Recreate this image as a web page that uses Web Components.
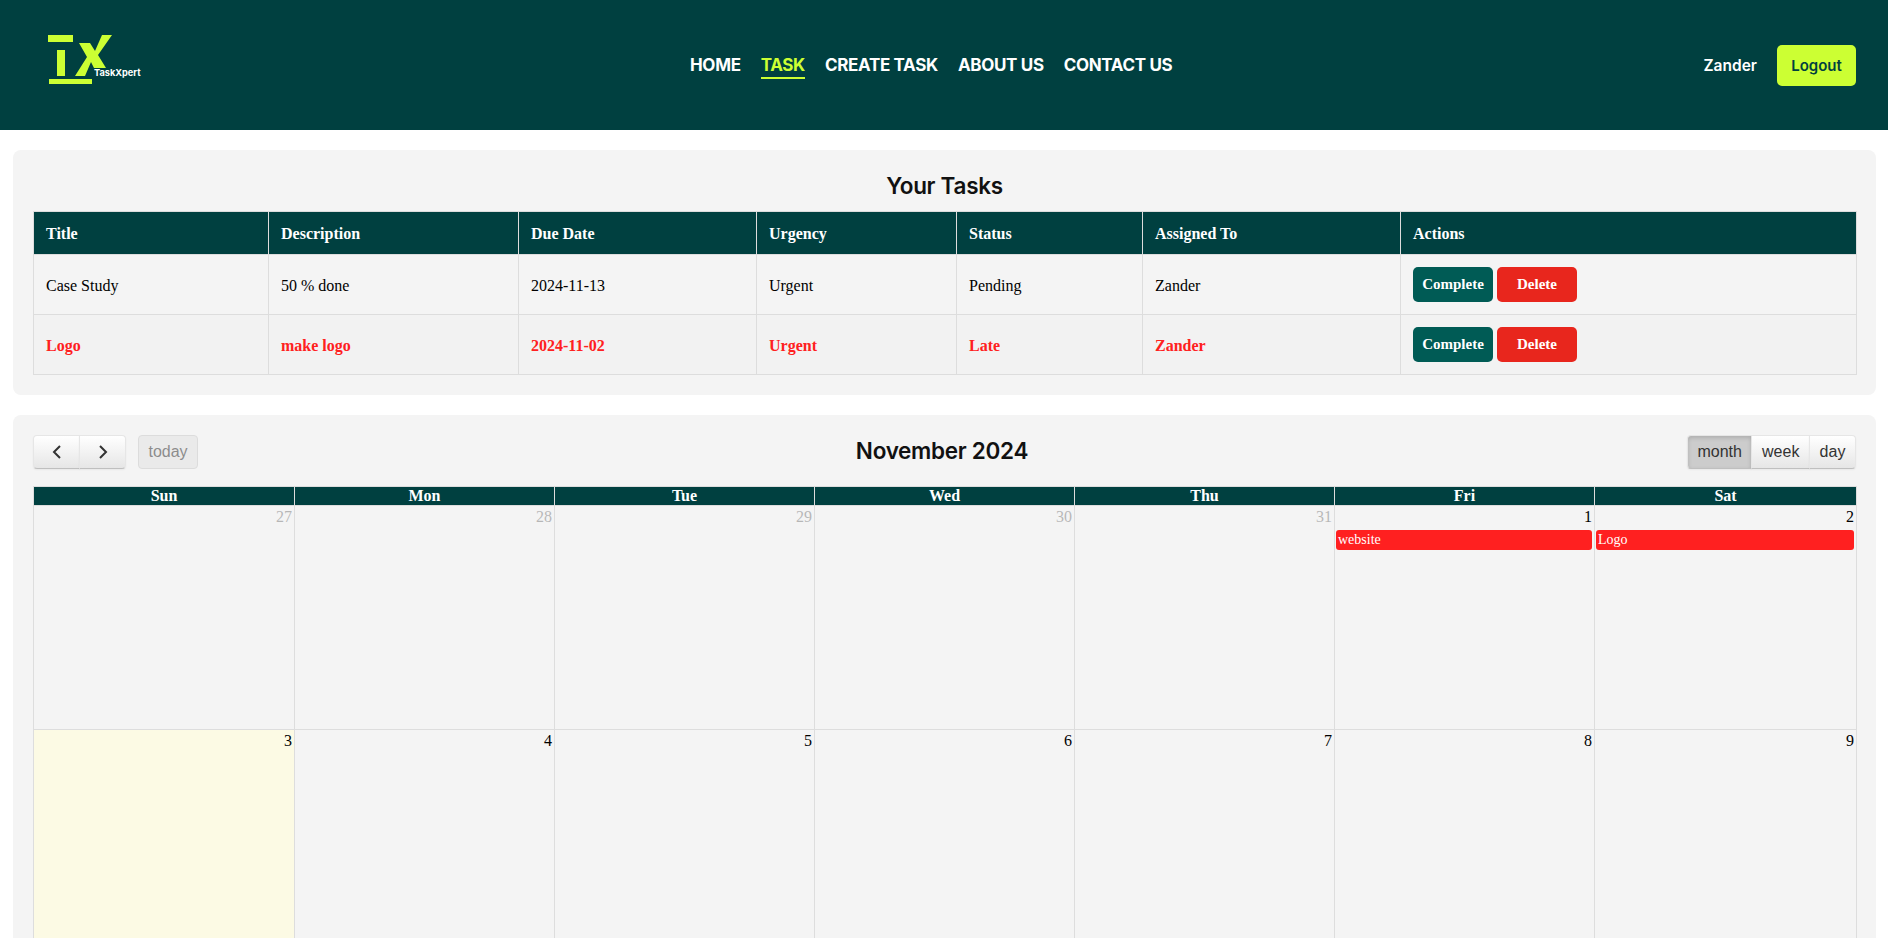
<!DOCTYPE html>
<html lang="en">
<head>
<meta charset="utf-8">
<title>TaskXpert</title>
<style>
  html, body { margin: 0; padding: 0; height: 100%; overflow: hidden; background: #fff; font-family: "Liberation Serif", "Times New Roman", serif; }
</style>
</head>
<body>
<tx-header user="Zander"></tx-header>
<tx-card>
  <tx-tasks></tx-tasks>
</tx-card>
<tx-card>
  <tx-calendar></tx-calendar>
</tx-card>

<script>
const GREEN = '#004040';
const LIME = '#ccff33';

class TxHeader extends HTMLElement {
    constructor() {
        super();
        const shadow = this.attachShadow({ mode: 'open' });
        const links = ['HOME', 'TASK', 'CREATE TASK', 'ABOUT US', 'CONTACT US'];
        shadow.innerHTML = `
        <style>
          :host { display: block; background: ${GREEN}; height: 130px; }
          .bar { display: grid; grid-template-columns: 642px auto 1fr; align-items: center; height: 130px; padding: 0 32px 0 48px; }
          .logo { position: relative; width: 94px; height: 50px; margin-top: -10px; }
          .logo svg { display: block; }
          .logo span { position: absolute; left: 46px; top: 33px; font: 700 9.2px/10px "Inter", sans-serif; color: #fff; white-space: nowrap; }
          nav { display: flex; gap: 20px; font: 700 17px/22px "Inter", sans-serif; letter-spacing: -0.33px; color: #fff; }
          nav a { display: block; padding: 3px 0 1px; border-bottom: 2px solid transparent; }
          nav a.active { color: ${LIME}; border-bottom-color: ${LIME}; }
          .user { display: flex; justify-content: flex-end; align-items: center; gap: 20px; font: 600 15.5px/20px "Inter", sans-serif; color: #fff; }
          .user span { padding-top: 2px; }
          button { width: 79px; height: 41px; border: 0; border-radius: 5px; background: ${LIME}; color: ${GREEN}; font: 600 15px "Inter", sans-serif; padding: 0; }
        </style>
        <div class="bar">
          <div class="logo">
            <svg width="94" height="50" viewBox="0 0 94 50" fill="${LIME}">
              <rect x="0" y="0" width="25" height="7"/>
              <rect x="9" y="15" width="8" height="26"/>
              <rect x="1" y="44" width="43" height="5"/>
              <polygon points="31,8 42,8 47,16 54,0 64,0 50,20 58,33 46,33 43,27 37,41 27,41 39,22"/>
            </svg>
            <span>TaskXpert</span>
          </div>
          <nav>${links.map(l => `<a class="${l === 'TASK' ? 'active' : ''}">${l}</a>`).join('')}</nav>
          <div class="user"><span>${this.getAttribute('user')}</span><button>Logout</button></div>
        </div>
      `;
    }
}

class TxCard extends HTMLElement {
    constructor() {
        super();
        const shadow = this.attachShadow({ mode: 'open' });
        shadow.innerHTML = `
        <style>
          :host { display: block; margin: 20px 12px 20px 13px; padding: 20px; background: #f4f4f4; border-radius: 8px; }
        </style>
        <slot></slot>
      `;
    }
}

class TxTasks extends HTMLElement {
    constructor() {
        super();
        const shadow = this.attachShadow({ mode: 'open' });
        const head = ['Title', 'Description', 'Due Date', 'Urgency', 'Status', 'Assigned To', 'Actions'];
        const widths = [235, 250, 238, 200, 186, 258, 456];
        const rows = [
            { cells: ['Case Study', '50 % done', '2024-11-13', 'Urgent', 'Pending', 'Zander'] },
            { cells: ['Logo', 'make logo', '2024-11-02', 'Urgent', 'Late', 'Zander'], late: true }
        ];
        shadow.innerHTML = `
        <style>
          :host { display: block; }
          h2 { margin: 0; height: 41px; padding-top: 1px; box-sizing: border-box; text-align: center; font: 600 22.5px/30px "Inter", sans-serif; letter-spacing: -0.3px; color: #111; }
          table { width: 100%; table-layout: fixed; border-collapse: collapse; font-size: 16px; color: #000; }
          th, td { border: 1px solid #ddd; padding: 0 12px; text-align: left; }
          th { height: 40px; padding-top: 2px; background: ${GREEN}; color: #fff; }
          td { padding-top: 2px; }
          td:last-child { height: 59px; padding-top: 0; }
          tr.late td { color: #ff2020; font-weight: 700; background: #f2f2f2; }
          .actions { display: flex; gap: 4px; }
          button { width: 80px; height: 35px; border: 0; border-radius: 5px; padding: 0; color: #fff; font: 700 15px "Liberation Serif", serif; }
          .done { background: #005b55; }
          .del { background: #e8261d; }
        </style>
        <h2>Your Tasks</h2>
        <table>
          <colgroup>${widths.map(w => `<col style="width:${w}px">`).join('')}</colgroup>
          <thead><tr>${head.map(h => `<th>${h}</th>`).join('')}</tr></thead>
          <tbody>
            ${rows.map(r => `
              <tr class="${r.late ? 'late' : ''}">
                ${r.cells.map(c => `<td>${c}</td>`).join('')}
                <td><div class="actions"><button class="done">Complete</button><button class="del">Delete</button></div></td>
              </tr>`).join('')}
          </tbody>
        </table>
      `;
    }
}

class TxCalendar extends HTMLElement {
    constructor() {
        super();
        const shadow = this.attachShadow({ mode: 'open' });
        const days = ['Sun', 'Mon', 'Tue', 'Wed', 'Thu', 'Fri', 'Sat'];
        const widths = [261, 260, 260, 260, 260, 260, 262];
        const events = { 1: 'website', 2: 'Logo' };

        // Only the two weeks that fit in the window
        const weeks = [];
        let num = 27, other = true;
        for (let w = 0; w < 2; w++) {
            const week = [];
            for (let d = 0; d < 7; d++) {
                week.push({ num, other, today: !other && num === 3, event: !other ? events[num] : null });
                num++;
                if (other && num > 31) { num = 1; other = false; }
            }
            weeks.push(week);
        }

        shadow.innerHTML = `
        <style>
          :host { display: block; }
          .toolbar { display: grid; grid-template-columns: 1fr auto 1fr; align-items: center; height: 34px; margin-bottom: 17px; }
          .left { display: flex; gap: 12px; }
          .right { display: flex; justify-content: flex-end; }
          .group { display: flex; }
          h2 { margin: -3px 5px 0 0; font: 600 22.5px/30px "Inter", sans-serif; letter-spacing: -0.3px; color: #111; }
          button {
            box-sizing: border-box; height: 34px; margin: 0; padding: 0 9.6px; font: 16px "Liberation Sans", Arial, sans-serif; color: #333;
            background: linear-gradient(#fff, #e6e6e6); border: 1px solid; border-color: #e6e6e6 #e6e6e6 #bfbfbf;
            box-shadow: inset 0 1px 0 rgba(255,255,255,.2), 0 1px 2px rgba(0,0,0,.05);
            display: flex; align-items: center; justify-content: center;
          }
          .group button + button { margin-left: -1px; }
          .group button:first-child { border-radius: 4px 0 0 4px; }
          .group button:last-child { border-radius: 0 4px 4px 0; }
          button.arrow { width: 47px; }
          button.today { width: 60px; border-radius: 4px; opacity: .65; background: #e6e6e6; border-color: #d0d0d0; box-shadow: none; color: #555; }
          button.active { background: #ccc; box-shadow: inset 0 2px 4px rgba(0,0,0,.15), 0 1px 2px rgba(0,0,0,.05); }
          table { width: 100%; table-layout: fixed; border-collapse: collapse; font-size: 16px; color: #000; }
          th { height: 18px; padding: 0; background: ${GREEN}; color: #fff; border: 1px solid #ddd; font-weight: 700; line-height: 18px; }
          td { height: 223px; padding: 0; border: 1px solid #ddd; vertical-align: top; }
          td.today { background: #fcfae4; }
          .num { text-align: right; padding: 2px 2px 0; line-height: 18px; }
          td.other .num { opacity: .25; }
          .event { margin: 4px 2px 0 1px; padding: 1px 2px; border-radius: 3px; background: #ff2020; color: #fff; font-size: 14px; line-height: 18px; }
        </style>
        <div class="toolbar">
          <div class="left">
            <div class="group">
              <button class="arrow" aria-label="prev"><svg width="12" height="16" viewBox="0 0 12 16" fill="none" stroke="#333" stroke-width="2"><path d="M9 2 3 8l6 6"/></svg></button>
              <button class="arrow" aria-label="next"><svg width="12" height="16" viewBox="0 0 12 16" fill="none" stroke="#333" stroke-width="2"><path d="m3 2 6 6-6 6"/></svg></button>
            </div>
            <button class="today">today</button>
          </div>
          <h2>November 2024</h2>
          <div class="right">
            <div class="group">
              <button class="active">month</button><button>week</button><button>day</button>
            </div>
          </div>
        </div>
        <table>
          <colgroup>${widths.map(w => `<col style="width:${w}px">`).join('')}</colgroup>
          <thead><tr>${days.map(d => `<th>${d}</th>`).join('')}</tr></thead>
          <tbody>
            ${weeks.map(week => `<tr>${week.map(c => `
              <td class="${c.other ? 'other' : ''} ${c.today ? 'today' : ''}">
                <div class="num">${c.num}</div>
                ${c.event ? `<div class="event">${c.event}</div>` : ''}
              </td>`).join('')}</tr>`).join('')}
          </tbody>
        </table>
      `;
    }
}

customElements.define('tx-header', TxHeader);
customElements.define('tx-card', TxCard);
customElements.define('tx-tasks', TxTasks);
customElements.define('tx-calendar', TxCalendar);
</script>
</body>
</html>
